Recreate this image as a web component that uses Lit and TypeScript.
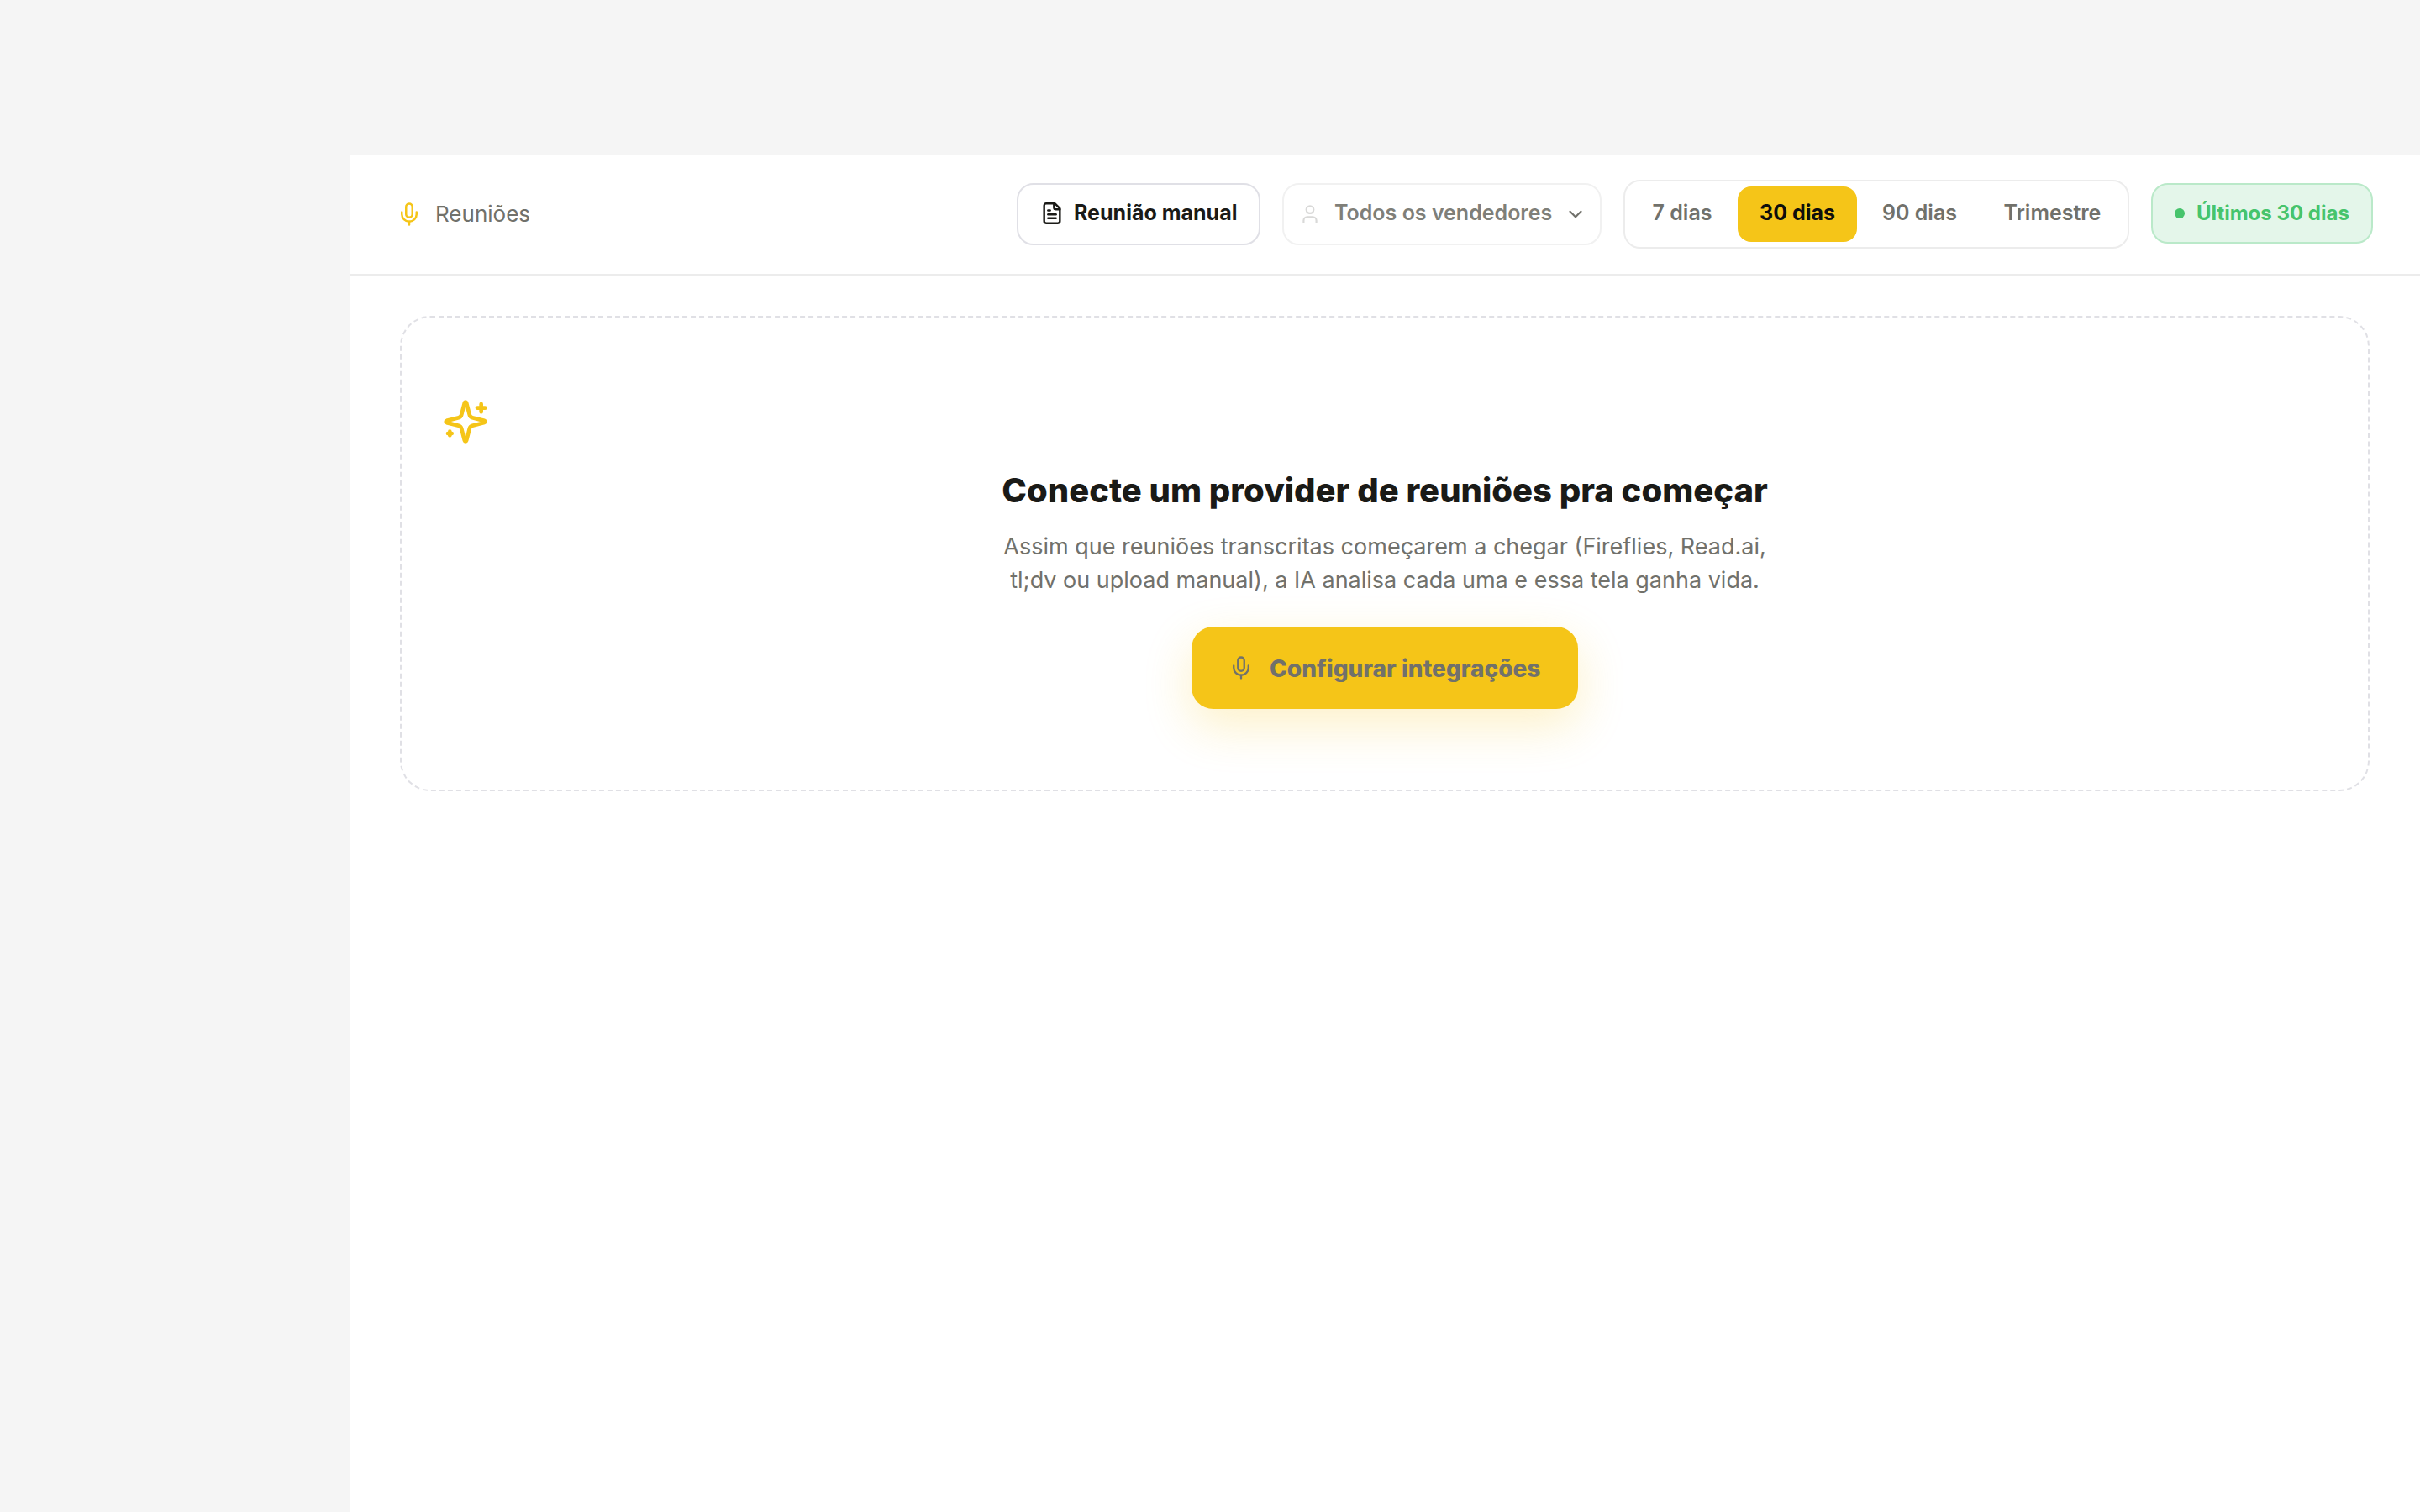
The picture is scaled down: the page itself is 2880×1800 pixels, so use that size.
import { LitElement, html, css, svg } from "lit";
import { customElement, state, property } from "lit/decorators.js";
import { classMap } from "lit/directives/class-map.js";

const ICONS = {
  mic: svg`<path d="M12 19v3"/><path d="M19 10v2a7 7 0 0 1-14 0v-2"/><rect x="9" y="2" width="6" height="13" rx="3"/>`,
  file: svg`<path d="M15 2H6a2 2 0 0 0-2 2v16a2 2 0 0 0 2 2h12a2 2 0 0 0 2-2V7Z"/><path d="M14 2v4a2 2 0 0 0 2 2h4"/><path d="M10 9H8"/><path d="M16 13H8"/><path d="M16 17H8"/>`,
  user: svg`<path d="M19 21v-2a4 4 0 0 0-4-4H9a4 4 0 0 0-4 4v2"/><circle cx="12" cy="7" r="4"/>`,
  chevron: svg`<path d="m6 9 6 6 6-6"/>`,
  sparkles: svg`<path d="M9.937 15.5A2 2 0 0 0 8.5 14.063l-6.135-1.582a.5.5 0 0 1 0-.962L8.5 9.936A2 2 0 0 0 9.937 8.5l1.582-6.135a.5.5 0 0 1 .963 0L14.063 8.5A2 2 0 0 0 15.5 9.937l6.135 1.581a.5.5 0 0 1 0 .964L15.5 14.063a2 2 0 0 0-1.437 1.437l-1.582 6.135a.5.5 0 0 1-.963 0z"/><path d="M20 3v4"/><path d="M22 5h-4"/><path d="M4 17v2"/><path d="M5 18H3"/>`,
};

@customElement("ui-icon")
class UiIcon extends LitElement {
  @property() name: keyof typeof ICONS = "mic";
  static styles = css`
    :host {
      display: block;
      flex: none;
    }
    .icon {
      display: block;
      width: 100%;
      height: 100%;
      fill: none;
      stroke: currentColor;
      stroke-width: var(--icon-stroke, 2);
      stroke-linecap: round;
      stroke-linejoin: round;
    }
  `;
  render() {
    return html`<svg class="icon" viewBox="0 0 24 24">${ICONS[this.name]}</svg>`;
  }
}

@customElement("app-root")
class AppRoot extends LitElement {
  @state() period = "30 dias";

  static styles = css`
    :host {
      display: block;
      font-family: Inter, "Liberation Sans", sans-serif;
      color: #1a1a17;
    }
    * {
      box-sizing: border-box;
    }
    button {
      font: inherit;
      color: inherit;
      border: 0;
      background: none;
      margin: 0;
      padding: 0;
      white-space: nowrap;
    }
    .shell {
      height: 1800px;
      padding: 184px 0 0 416px;
      background: #f5f5f5;
      overflow: hidden;
    }
    .main {
      height: 100%;
      background: #ffffff;
    }
    .header {
      display: flex;
      align-items: center;
      height: 144px;
      padding: 0 56px;
      border-bottom: 2px solid #ececec;
    }
    .crumb {
      display: flex;
      align-items: center;
      gap: 16px;
      margin-right: auto;
      color: #71716b;
      font-size: 26px;
      line-height: 31px;
    }
    .crumb-text {
      padding-bottom: 1px;
    }
    .crumb-icon {
      width: 30px;
      height: 30px;
      color: #f5c518;
    }
    .tools {
      display: flex;
      align-items: center;
      gap: 26px;
      font-size: 25px;
      line-height: 30px;
    }
    .label {
      padding-bottom: 4px;
    }
    .manual {
      display: flex;
      align-items: center;
      gap: 12px;
      width: 290px;
      height: 74px;
      padding-left: 26px;
      border: 2px solid #e0e0e6;
      border-radius: 20px;
      font-weight: 700;
    }
    .manual-icon {
      width: 28px;
      height: 28px;
      margin-bottom: 2px;
      --icon-stroke: 2.1;
    }
    .seller {
      display: flex;
      align-items: center;
      width: 380px;
      height: 74px;
      padding: 0 16px 0 18px;
      border: 2px solid #f1f1f1;
      border-radius: 20px;
      font-weight: 600;
      color: #7f7f79;
    }
    .seller-text {
      margin-left: 16px;
      margin-right: auto;
    }
    .seller-icon {
      width: 26px;
      height: 26px;
      color: #d9d9d8;
    }
    .seller-chevron {
      width: 26px;
      height: 26px;
      color: #71716b;
    }
    .periods {
      display: grid;
      grid-template-columns: 124px 142px 141px 167px;
      gap: 4px;
      padding: 6px;
      border: 2px solid #ececec;
      border-radius: 20px;
    }
    .period {
      height: 66px;
      padding-bottom: 4px;
      border-radius: 16px;
      font-weight: 600;
      color: #71716b;
    }
    .period.active {
      background: #f5c518;
      color: #0e0e0c;
      font-weight: 700;
    }
    .badge {
      display: flex;
      align-items: center;
      gap: 14px;
      width: 264px;
      height: 72px;
      margin-bottom: 2px;
      padding-left: 26px;
      border: 2px solid #bae9c9;
      border-radius: 20px;
      background: #e4f6ea;
      color: #46c46c;
      font-size: 24px;
      line-height: 29px;
      font-weight: 700;
      white-space: nowrap;
    }
    .badge-text {
      padding-bottom: 1px;
    }
    .dot {
      width: 12px;
      height: 12px;
      border-radius: 50%;
      background: currentColor;
    }
    .content {
      padding: 48px 60px;
    }
    .empty {
      display: flex;
      flex-direction: column;
      align-items: center;
      padding: 96px 48px;
      border: 2px dashed #e0e0e5;
      border-radius: 36px;
      text-align: center;
    }
    .empty-icon {
      width: 56px;
      height: 56px;
      align-self: flex-start;
      color: #f5c518;
    }
    .title {
      margin: 30px 0 0;
      font-size: 40px;
      line-height: 47px;
      font-weight: 800;
    }
    .text {
      width: 920px;
      margin: 23.5px 0 35.5px;
      font-size: 27px;
      line-height: 40px;
      color: #71716b;
    }
    .cta {
      display: flex;
      align-items: center;
      gap: 19px;
      width: 460px;
      height: 98px;
      padding-left: 44px;
      border-radius: 26px;
      background: #f5c518;
      box-shadow: 0 20px 56px rgba(245, 197, 24, 0.24);
      color: #71716b;
      font-size: 28px;
      line-height: 34px;
      font-weight: 800;
    }
    .cta-text {
      padding-top: 2px;
    }
    .cta-icon {
      width: 30px;
      height: 30px;
      --icon-stroke: 1.85;
    }
  `;

  render() {
    return html`
      <div class="shell">
        <main class="main">
          <header class="header">
            <div class="crumb">
              <ui-icon class="crumb-icon" name="mic"></ui-icon>
              <span class="crumb-text">Reuniões</span>
            </div>
            <div class="tools">
              <button class="manual">
                <ui-icon class="manual-icon" name="file"></ui-icon>
                <span class="label">Reunião manual</span>
              </button>
              <button class="seller">
                <ui-icon class="seller-icon" name="user"></ui-icon>
                <span class="label seller-text">Todos os vendedores</span>
                <ui-icon class="seller-chevron" name="chevron"></ui-icon>
              </button>
              <div class="periods">
                ${["7 dias", "30 dias", "90 dias", "Trimestre"].map(
                  (p) => html`<button
                    class=${classMap({ period: true, active: p === this.period })}
                    @click=${() => (this.period = p)}
                  >${p}</button>`
                )}
              </div>
              <div class="badge">
                <span class="dot"></span>
                <span class="badge-text">Últimos 30 dias</span>
              </div>
            </div>
          </header>
          <section class="content">
            <div class="empty">
              <ui-icon class="empty-icon" name="sparkles"></ui-icon>
              <h2 class="title">Conecte um provider de reuniões pra começar</h2>
              <p class="text">
                Assim que reuniões transcritas começarem a chegar (Fireflies, Read.ai,
                tl;dv ou upload manual), a IA analisa cada uma e essa tela ganha vida.
              </p>
              <button class="cta">
                <ui-icon class="cta-icon" name="mic"></ui-icon>
                <span class="cta-text">Configurar integrações</span>
              </button>
            </div>
          </section>
        </main>
      </div>
    `;
  }
}
